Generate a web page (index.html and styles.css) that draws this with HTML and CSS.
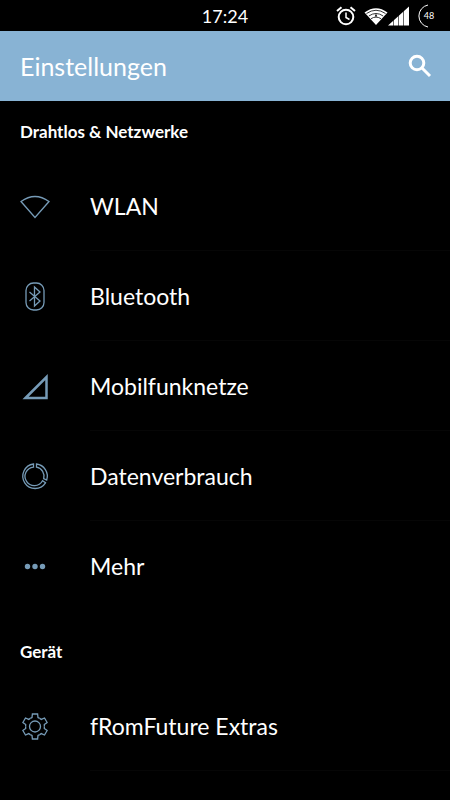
FILE: index.html
```html
<!DOCTYPE html>
<html lang="de">
<head>
<meta charset="utf-8">
<meta name="viewport" content="width=device-width, initial-scale=1">
<title>Einstellungen</title>
<link rel="stylesheet" href="styles.css">
</head>
<body>
<div class="status">
  <time class="clock">17:24</time>
  <div class="indicators">
    <svg width="20" height="20" viewBox="0 0 20 20" fill="none" stroke="#fff" stroke-width="2"><circle cx="10" cy="11" r="7.3"/><path d="M10 6.500v5l3.500 2" stroke-width="1.500"/><path d="M1 5l4.500-3.800M19 5l-4.500-3.800"/></svg>
    <svg class="wifi" width="24" height="20" viewBox="0 0 24 20"><path d="M0.500 6.500Q12-2 23.500 6.500L12 19z" fill="#fff"/><path d="M2.500 7.500Q12 1 21.500 7.500M4.800 10Q12 5 19.200 10M7 12.700Q12 9.500 17 12.700" fill="none" stroke="#000" stroke-width=".8"/><path d="M12 7.500l1.200 3h-2.400z" fill="#000"/></svg>
    <svg width="22" height="20" viewBox="0 0 22 20"><path d="M0 19.500L21 .500v19z" fill="#fff"/><path d="M5.500 14v6M10.500 9v11M15.500 5v15" stroke="#000" stroke-width=".6"/></svg>
    <span class="battery">
      <svg class="ring" width="24" height="24" viewBox="0 0 24 24" fill="none" stroke="#fff"><path d="M11 1A11.200 11.200 0 0 0 11 23"/></svg>
      <span class="level">48</span>
    </span>
  </div>
</div>
<header class="bar">
  <h1>Einstellungen</h1>
  <button class="search" type="button" aria-label="Suchen">
    <svg width="24" height="24" viewBox="0 0 24 24" fill="none" stroke="#fff" stroke-width="3"><circle cx="9" cy="9" r="6.800"/><path d="M14 14l8 8"/></svg>
  </button>
</header>
<main>
  <section>
    <h2>Drahtlos &amp; Netzwerke</h2>
    <ul>
      <li><a href="#wlan"><svg class="icon" viewBox="0 0 30 30"><path d="M1 10.500Q15 .5 29 10.500L15 26.500z"/></svg><span>WLAN</span></a></li>
      <li><a href="#bluetooth"><svg class="icon" viewBox="0 0 30 30"><rect x="6" y="2" width="18" height="27" rx="7.500"/><path d="M9.500 11L20 20L14.500 25V6L20 11L9.500 20"/></svg><span>Bluetooth</span></a></li>
      <li><a href="#mobil"><svg class="icon" viewBox="0 0 30 30"><path d="M5.500 27L26.500 6V27z" stroke-width="2.500"/></svg><span>Mobilfunknetze</span></a></li>
      <li><a href="#daten"><svg class="icon" viewBox="0 0 30 30"><path d="M13.500 3A12.300 12.300 0 1 0 25.500 21.800L22.500 19.800A9.300 9.300 0 1 1 13.500 6.100zM16.500 3A12.300 12.300 0 0 1 26.700 19L23.700 17.700A9.300 9.300 0 0 0 16.500 6.100z"/></svg><span>Datenverbrauch</span></a></li>
      <li><a href="#mehr"><svg class="icon dots" viewBox="0 0 30 30"><circle cx="7.500" cy="15.500" r="2.700"/><circle cx="15" cy="15.500" r="2.700"/><circle cx="22.500" cy="15.500" r="2.700"/></svg><span>Mehr</span></a></li>
    </ul>
  </section>
  <section>
    <h2>Gerät</h2>
    <ul>
      <li><a href="#extras"><svg class="icon" viewBox="0 0 30 30"><defs><path id="tooth" d="M10.300 7.400L12 6.500L12.400 3H17.600L18 6.500L19.700 7.400"/></defs><circle cx="15" cy="15.500" r="5.500"/><use href="#tooth"/><use href="#tooth" transform="rotate(60 15 15.500)"/><use href="#tooth" transform="rotate(120 15 15.500)"/><use href="#tooth" transform="rotate(180 15 15.500)"/><use href="#tooth" transform="rotate(240 15 15.500)"/><use href="#tooth" transform="rotate(300 15 15.500)"/></svg><span>fRomFuture Extras</span></a></li>
    </ul>
  </section>
</main>
</body>
</html>
```
FILE: styles.css
```css
* { box-sizing: border-box; }

body {
  margin: 0;
  background: #000;
  color: #fff;
  font-family: Lato, "Liberation Sans", sans-serif;
}

.status {
  display: grid;
  grid-template-columns: 1fr auto 1fr;
  align-items: center;
  height: 31px;
}

.clock {
  grid-column: 2;
  font-size: 18px;
  line-height: 24px;
}

.indicators {
  display: flex;
  justify-content: flex-end;
  align-items: center;
  padding-right: 9px;
}

.wifi { margin-left: 8px; }

.battery {
  position: relative;
  display: grid;
  place-items: center;
  width: 24px;
  height: 24px;
  margin-left: 7px;
}

.ring { position: absolute; inset: 0; }

.level {
  font-size: 9px;
  line-height: 12px;
}

.bar {
  display: flex;
  align-items: center;
  justify-content: space-between;
  height: 70px;
  padding: 0 18px 0 20px;
  background: #88b3d4;
}

h1 {
  margin: 0;
  font-size: 25px;
  font-weight: 400;
  line-height: 32px;
}

.search {
  display: flex;
  padding: 0;
  border: 0;
  background: none;
}

h2 {
  margin: 0;
  padding: 2px 20px 0;
  font-size: 17px;
  font-weight: 700;
  line-height: 58px;
}

section + section { margin-top: 10px; }

ul {
  margin: 0;
  padding: 0;
  list-style: none;
}

li a {
  display: flex;
  align-items: center;
  gap: 40px;
  height: 90px;
  padding-left: 20px;
  color: inherit;
  font-size: 23px;
  line-height: 30px;
  text-decoration: none;
}

li span {
  display: flex;
  flex: 1;
  align-items: center;
  align-self: stretch;
  border-bottom: 1px solid #060606;
}

section:first-child li:last-child span { border-color: transparent; }

.icon {
  width: 30px;
  height: 30px;
  fill: none;
  stroke: #769bb7;
  stroke-width: 1.3;
}

.dots {
  fill: #769bb7;
  stroke: none;
}
```
